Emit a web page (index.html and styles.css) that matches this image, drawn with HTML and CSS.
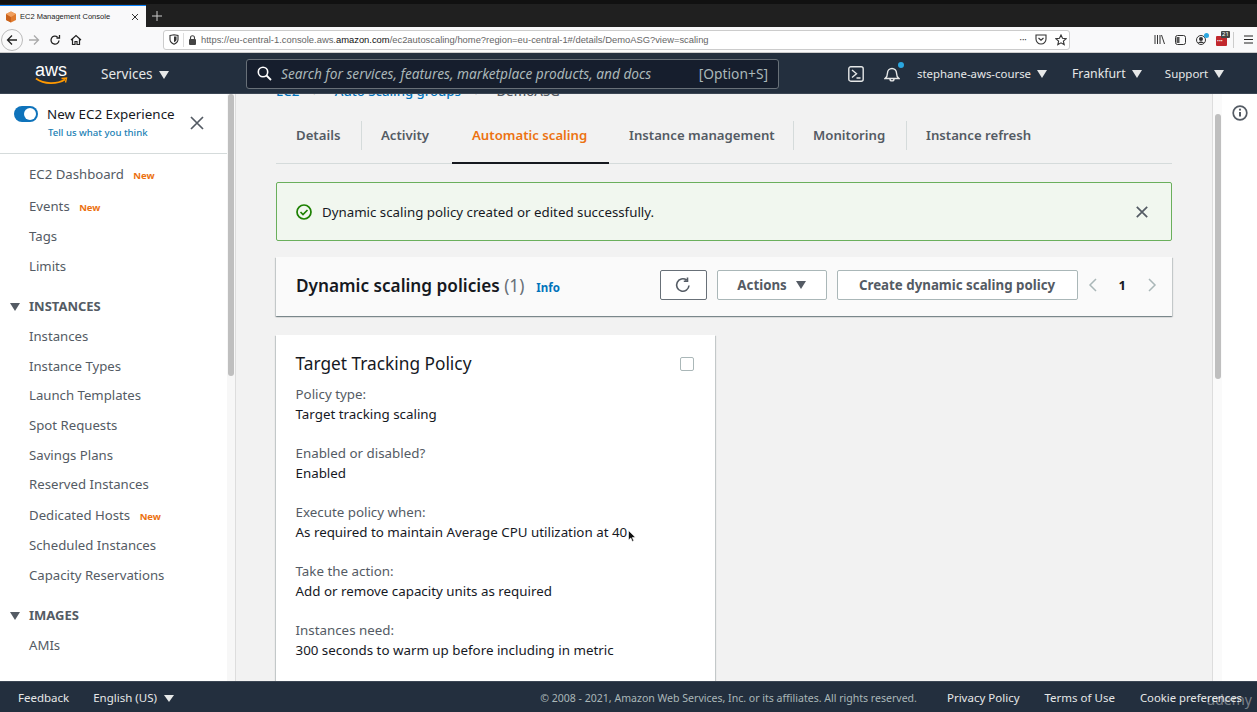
FILE: index.html
```html
<!DOCTYPE html>
<html lang="en">
<head>
  <meta charset="utf-8"/>
  <title>EC2 Management Console</title>
  <link rel="stylesheet" href="styles.css">
</head>
<body>
  <div class="tabbar">
    <div class="tab">
      <svg class="tab-icon" width="12" height="12" viewBox="0 0 12 12"><path d="M6 0.5 11 3v6L6 11.5 1 9V3z" fill="#e07b2e"/><path d="M6 6v5.5L1 9V3z" fill="#c9621c"/><path d="M6 0.5 11 3 6 6 1 3z" fill="#f0a060"/></svg>
      <span class="tab-title">EC2 Management Console</span>
      <svg class="tab-close" width="8" height="8" viewBox="0 0 8 8"><path d="M1 1l6 6M7 1L1 7" stroke="#333" stroke-width="1"/></svg>
    </div>
    <svg class="tab-new" width="10" height="10" viewBox="0 0 10 10"><path d="M5 0v10M0 5h10" stroke="#ccc" stroke-width="1"/></svg>
  </div>

  <div class="toolbar">
    <div class="back-btn">
      <svg width="12" height="12" viewBox="0 0 12 12"><path d="M11 6H1.500M6 1.500 1.500 6 6 10.500" fill="none" stroke="#222" stroke-width="1.300"/></svg>
    </div>
    <svg class="tool-icon" width="12" height="12" viewBox="0 0 12 12"><path d="M1 6h9.500M6 1.500 10.500 6 6 10.500" fill="none" stroke="#aaa" stroke-width="1.300"/></svg>
    <svg class="tool-icon" width="12" height="12" viewBox="0 0 12 12"><path d="M10 6.500A4 4 0 1 1 8.500 3M10.500 1v3h-3" fill="none" stroke="#222" stroke-width="1.300"/></svg>
    <svg class="tool-icon" width="12" height="12" viewBox="0 0 12 12"><path d="M1 6 6 1.500 11 6M2.500 5v5.500h2.500V7.500h2v3h2.500V5" fill="none" stroke="#222" stroke-width="1.200"/></svg>
    <div class="urlbar">
      <svg width="10" height="11" viewBox="0 0 10 11"><path d="M1 1.500 5 .8l4 .7v4c0 2.300-2 3.800-4 4.700-2-.9-4-2.400-4-4.700z" fill="none" stroke="#333" stroke-width="1.100"/><path d="M5 2.500h2.500v3C7.500 6.800 6 7.700 5 8.200z" fill="#333"/></svg>
      <span class="url-sep"></span>
      <svg width="9" height="10" viewBox="0 0 9 10"><rect x="1" y="4" width="7" height="6" rx="1" fill="#444"/><path d="M2.500 4V2.800a2 2 0 0 1 4 0V4" fill="none" stroke="#444" stroke-width="1.100"/></svg>
      <span class="url">https://eu-central-1.console.aws.<b>amazon.com</b>/ec2autoscaling/home?region=eu-central-1#/details/DemoASG?view=scaling</span>
      <span class="url-dots">•••</span>
      <svg class="url-act" width="12" height="11" viewBox="0 0 12 11"><path d="M1 1h10v4a5 5 0 0 1-10 0z" fill="none" stroke="#333" stroke-width="1.100"/><path d="M3.500 4 6 6.300 8.500 4" fill="none" stroke="#333" stroke-width="1.200"/></svg>
      <svg class="url-act" width="12" height="12" viewBox="0 0 12 12"><path d="M6 1l1.500 3.300 3.600.4-2.700 2.400.8 3.600L6 8.800l-3.200 1.900.8-3.600L.9 4.700l3.600-.4z" fill="none" stroke="#333" stroke-width="1.100"/></svg>
    </div>
    <div class="tool-right">
      <svg width="11" height="11" viewBox="0 0 11 11"><path d="M1 1v9M3.500 1v9M6 1v9M7.500 1l3 9" stroke="#333" stroke-width="1" fill="none"/></svg>
      <svg width="11" height="10" viewBox="0 0 11 10"><rect x=".5" y=".5" width="10" height="9" rx="2" fill="none" stroke="#333"/><rect x="1.500" y="2" width="3" height="6" fill="#555"/></svg>
      <span class="profile-ic">
        <svg width="10" height="10" viewBox="0 0 10 10"><circle cx="5" cy="5" r="4.500" fill="none" stroke="#333"/><circle cx="5" cy="4" r="2" fill="#333"/><path d="M2 8c1-2 5-2 6 0" fill="#333"/></svg>
        <i class="profile-dot"></i>
      </span>
      <span class="ext-ic"><i>•••</i><em>21</em></span>
      <span class="tool-sep"></span>
      <svg width="9" height="9" viewBox="0 0 9 9"><path d="M0 1h9M0 4.500h9M0 8h9" stroke="#222" stroke-width="1.100"/></svg>
    </div>
  </div>

  <header class="topnav">
    <div class="aws-logo">
      <span>aws</span>
      <svg width="33" height="9" viewBox="0 0 33 9"><path d="M1 1.500c8 6 21 6 29 1" fill="none" stroke="#f90" stroke-width="1.700"/><path d="M26.500 1.500l5-.5-1 4.500" fill="none" stroke="#f90" stroke-width="1.400"/></svg>
    </div>
    <a class="nav-item services">Services <i class="caret"></i></a>
    <div class="search">
      <svg width="15" height="15" viewBox="0 0 15 15"><circle cx="6" cy="6" r="4.700" fill="none" stroke="#fff" stroke-width="1.600"/><path d="M9.500 9.500 14 14" stroke="#fff" stroke-width="1.800"/></svg>
      <span class="search-text">Search for services, features, marketplace products, and docs</span>
      <span class="search-key">[Option+S]</span>
    </div>
    <svg class="cloudshell" width="16" height="16" viewBox="0 0 16 16"><rect x=".8" y=".8" width="14.400" height="14.400" rx="2" fill="none" stroke="#e6e8e8" stroke-width="1.400"/><path d="M4 4l4.500 3.800L4 11.500M8.500 12h4" fill="none" stroke="#e6e8e8" stroke-width="1.400"/></svg>
    <span class="bell">
      <svg width="16" height="16" viewBox="0 0 16 16"><path d="M1 12.500c2-1.500 2.500-3 2.500-5.500a4.500 4.500 0 0 1 9 0c0 2.500.5 4 2.500 5.500zM6 13c0 2.500 4 2.500 4 0" fill="none" stroke="#e6e8e8" stroke-width="1.400"/></svg>
      <i class="bell-dot"></i>
    </span>
    <a class="nav-item account">stephane-aws-course <i class="caret"></i></a>
    <a class="nav-item region">Frankfurt <i class="caret"></i></a>
    <a class="nav-item support">Support <i class="caret"></i></a>
  </header>

  <div class="workspace">
    <aside class="sidebar">
      <div class="exp">
        <div class="exp-text">
          <div class="exp-row"><span class="toggle"></span><span class="exp-title">New EC2 Experience</span></div>
          <a class="exp-link">Tell us what you think</a>
        </div>
        <svg class="exp-close" width="14" height="14" viewBox="0 0 14 14"><path d="M1 1l12 12M13 1 1 13" stroke="#545b64" stroke-width="1.700"/></svg>
      </div>
      <nav class="side-nav">
        <a class="new-row">EC2 Dashboard <em>New</em></a>
        <a class="new-row">Events <em>New</em></a>
        <a>Tags</a>
        <a>Limits</a>
        <h3><i class="side-caret"></i>INSTANCES</h3>
        <a>Instances</a>
        <a>Instance Types</a>
        <a>Launch Templates</a>
        <a>Spot Requests</a>
        <a>Savings Plans</a>
        <a>Reserved Instances</a>
        <a class="new-row">Dedicated Hosts <em>New</em></a>
        <a>Scheduled Instances</a>
        <a>Capacity Reservations</a>
        <h3><i class="side-caret"></i>IMAGES</h3>
        <a>AMIs</a>
      </nav>
    </aside>
    <div class="scroll-track left"><span class="thumb"></span></div>

    <main class="content">
      <div class="crumbs"><a>EC2</a><span>&gt;</span><a>Auto Scaling groups</a><span>&gt;</span><b>DemoASG</b></div>
      <div class="tabs">
        <a class="t t-details">Details</a>
        <a class="t t-activity sep">Activity</a>
        <a class="t t-scaling active">Automatic scaling</a>
        <a class="t t-manage">Instance management</a>
        <a class="t t-monitor sep">Monitoring</a>
        <a class="t sep">Instance refresh</a>
      </div>

      <div class="flash">
        <svg width="16" height="16" viewBox="0 0 16 16"><circle cx="8" cy="8" r="7" fill="none" stroke="#1d8102" stroke-width="1.700"/><path d="M4.500 8l2.500 2.500 4.500-4.500" fill="none" stroke="#1d8102" stroke-width="1.700"/></svg>
        <span class="flash-text">Dynamic scaling policy created or edited successfully.</span>
        <svg class="flash-close" width="12" height="12" viewBox="0 0 12 12"><path d="M.8.8l10.400 10.400M11.200.8.8 11.200" stroke="#545b64" stroke-width="1.700"/></svg>
      </div>

      <section class="policies-head">
        <h2>Dynamic scaling policies <span>(1)</span></h2>
        <a class="info">Info</a>
        <button class="btn refresh"><svg width="16" height="16" viewBox="0 0 16 16"><path d="M14 8.500A6.200 6.200 0 1 1 11.500 3M12.500 .5v3.700H8.800" fill="none" stroke="#545b64" stroke-width="1.600"/></svg></button>
        <button class="btn actions">Actions <i class="caret dark"></i></button>
        <button class="btn create">Create dynamic scaling policy</button>
        <div class="pager">
          <svg width="9" height="14" viewBox="0 0 9 14"><path d="M8 1 2 7l6 6" fill="none" stroke="#aab7b8" stroke-width="1.500"/></svg>
          <b>1</b>
          <svg width="9" height="14" viewBox="0 0 9 14"><path d="M1 1l6 6-6 6" fill="none" stroke="#aab7b8" stroke-width="1.500"/></svg>
        </div>
      </section>

      <section class="policy-card">
        <div class="card-title"><h3>Target Tracking Policy</h3><span class="check"></span></div>
        <dl>
          <dt>Policy type:</dt><dd>Target tracking scaling</dd>
          <dt>Enabled or disabled?</dt><dd>Enabled</dd>
          <dt>Execute policy when:</dt><dd>As required to maintain Average CPU utilization at 40</dd>
          <dt>Take the action:</dt><dd>Add or remove capacity units as required</dd>
          <dt>Instances need:</dt><dd>300 seconds to warm up before including in metric</dd>
        </dl>
      </section>
    </main>

    <div class="scroll-track right"><span class="thumb"></span></div>
    <div class="help-rail">
      <svg width="16" height="16" viewBox="0 0 16 16"><circle cx="8" cy="8" r="6.800" fill="none" stroke="#545b64" stroke-width="1.700"/><path d="M8 7v4.500" stroke="#545b64" stroke-width="2"/><circle cx="8" cy="4.700" r="1.100" fill="#545b64"/></svg>
    </div>
  </div>

  <footer class="foot">
    <a class="feedback">Feedback</a>
    <a class="lang">English (US) <i class="caret"></i></a>
    <span class="copy">© 2008 - 2021, Amazon Web Services, Inc. or its affiliates. All rights reserved.</span>
    <a>Privacy Policy</a>
    <a>Terms of Use</a>
    <a class="cookie">Cookie preferences</a>
  </footer>

  <span class="watermark">udemy</span>
  <svg class="cursor" width="8" height="13" viewBox="0 0 8 13"><path d="M.5.5v9.500l2.300-2 1.500 3.500 1.500-.7L4.300 7.500l3-.3z" fill="#111" stroke="#fff" stroke-width=".6"/></svg>
</body>
</html>
```

FILE: styles.css
```css
:root {
  --nav: #232f3e;
  --text: #16191f;
  --muted: #545b64;
  --link: #0073bb;
  --orange: #ec7211;
  --line: #d5dbdb;
  --font: "Noto Sans", "Open Sans", sans-serif;
}

* {
  margin: 0;
  padding: 0;
  box-sizing: border-box;
}

html, body {
  height: 100%;
  overflow: hidden;
}

body {
  display: flex;
  flex-direction: column;
  font-family: var(--font);
  color: var(--text);
  background: #fff;
  position: relative;
}

a {
  cursor: pointer;
}

/* browser chrome */
.tabbar {
  height: 27px;
  flex: none;
  display: flex;
  align-items: flex-end;
  background: #202020;
  border-top: 4px solid #111;
}

.tab {
  width: 146px;
  height: 22px;
  background: #f9f9fa;
  border-top: 1px solid #0a84ff;
  display: flex;
  align-items: center;
  padding-left: 5px;
  font-family: "Liberation Sans", sans-serif;
}

.tab-title {
  font-size: 7.500px;
  color: #222;
  margin-left: 3px;
  width: 111px;
  white-space: nowrap;
}

.tab-new {
  margin: 0 0 6px 6px;
}

.toolbar {
  height: 26px;
  flex: none;
  display: flex;
  align-items: center;
  background: #f9f9fa;
  border-bottom: 1px solid #ccc;
  padding-left: 1px;
}

.back-btn {
  width: 22px;
  height: 22px;
  border: 1px solid #bbb;
  border-radius: 50%;
  display: flex;
  align-items: center;
  justify-content: center;
  margin-right: 5px;
}

.tool-icon {
  margin-right: 9px;
}

.urlbar {
  width: 907px;
  height: 20px;
  margin-left: 72px;
  background: #fff;
  border: 1px solid #ccc;
  border-radius: 3px;
  display: flex;
  align-items: center;
  padding: 0 2px 0 5px;
  gap: 4px;
}

.url-sep {
  width: 1px;
  height: 14px;
  background: #ddd;
}

.url {
  font-family: "Liberation Sans", sans-serif;
  font-size: 9.400px;
  color: #666;
  flex: 1;
  white-space: nowrap;
}

.url b {
  font-weight: 400;
  color: #111;
}

.url-dots {
  font-size: 5px;
  color: #333;
  letter-spacing: 0.5px;
}

.url-act {
  margin-left: 4px;
}

.tool-right {
  flex: 1;
  display: flex;
  align-items: center;
  justify-content: flex-end;
  gap: 10px;
  padding-right: 4px;
}

.profile-ic {
  position: relative;
  display: flex;
}

.profile-dot {
  position: absolute;
  top: -2px;
  right: -3px;
  width: 5px;
  height: 5px;
  border-radius: 50%;
  background: #2aa7e0;
}

.ext-ic {
  position: relative;
  width: 11px;
  height: 10px;
  background: #c1272d;
  border-radius: 1px;
  margin-top: 2px;
}

.ext-ic i {
  position: absolute;
  left: 1px;
  top: 0;
  font-style: normal;
  font-size: 5px;
  color: #fff;
  line-height: 10px;
}

.ext-ic em {
  position: absolute;
  top: -5px;
  left: 5px;
  font-style: normal;
  font-size: 6px;
  line-height: 7px;
  padding: 0 1px;
  color: #fff;
  background: #444;
  border-radius: 1px;
}

.tool-sep {
  width: 1px;
  height: 16px;
  background: #ccc;
  margin-left: -4px;
}

/* aws nav */
.topnav {
  height: 41px;
  flex: none;
  background: var(--nav);
  border-bottom: 1px solid #3b4654;
  padding-top: 1px;
  display: flex;
  align-items: center;
  color: #e6e8e8;
  font-size: 12.300px;
}

.caret {
  display: inline-block;
  width: 0;
  height: 0;
  border-left: 5px solid transparent;
  border-right: 5px solid transparent;
  border-top: 8px solid currentColor;
  margin-left: 3px;
}

.caret.dark {
  color: var(--muted);
}

.aws-logo {
  width: 34px;
  margin-left: 34px;
  display: flex;
  flex-direction: column;
  align-items: center;
  color: #fff;
  font-family: "Liberation Sans", sans-serif;
  font-size: 18px;
  line-height: 16px;
}

.aws-logo svg {
  margin-top: -1px;
}

.services {
  margin-left: 33px;
  width: 145px;
  font-size: 13.500px;
}

.search {
  width: 533px;
  height: 30px;
  background: #161e2d;
  border: 1px solid #687078;
  border-radius: 3px;
  display: flex;
  align-items: center;
  padding: 0 10px;
  gap: 9px;
}

.search-text {
  flex: 1;
  font-style: italic;
  font-size: 13.700px;
  color: #aab7b8;
  white-space: nowrap;
}

.search-key {
  font-size: 13.800px;
  color: #aab7b8;
}

.cloudshell {
  margin-left: 69px;
}

.bell {
  position: relative;
  display: flex;
  margin-left: 20px;
}

.bell-dot {
  position: absolute;
  top: -4px;
  right: -4px;
  width: 6px;
  height: 6px;
  border-radius: 50%;
  background: #2aa7e0;
}

.account {
  margin-left: 17px;
  white-space: nowrap;
  font-size: 11.400px;
}

.region {
  margin-left: 25px;
}

.support {
  margin-left: 23px;
  font-size: 11.500px;
}

/* body area */
.workspace {
  flex: 1;
  min-height: 0;
  display: flex;
}

.sidebar {
  width: 227px;
  flex: none;
  overflow: hidden;
  background: #fff;
}

.exp {
  height: 60px;
  border-bottom: 1px solid var(--line);
  display: flex;
  padding: 11px 0 0 14px;
}

.exp-text {
  width: 176px;
}

.exp-row {
  display: flex;
  align-items: center;
  gap: 9px;
  height: 18px;
}

.toggle {
  position: relative;
  width: 24px;
  height: 16px;
  border-radius: 8px;
  background: #0f73bb;
}

.toggle::after {
  content: "";
  position: absolute;
  right: 2px;
  top: 2px;
  width: 12px;
  height: 12px;
  border-radius: 50%;
  background: #fff;
}

.exp-title {
  font-size: 13.400px;
  white-space: nowrap;
}

.exp-link {
  display: block;
  margin: 3px 0 0 34px;
  font-size: 9.600px;
  font-weight: 500;
  color: #1a7fb4;
  white-space: nowrap;
}

.exp-close {
  margin: 11px 0 0 0;
}

.side-nav {
  padding-top: 5px;
}

.side-nav a {
  display: block;
  height: 29.600px;
  line-height: 29.600px;
  padding-left: 29px;
  font-size: 13.200px;
  color: var(--muted);
  white-space: nowrap;
}

.side-nav .new-row {
  height: 31.500px;
  line-height: 30px;
}

.side-nav em {
  font-style: normal;
  font-weight: 700;
  font-size: 9.500px;
  color: var(--orange);
  margin-left: 6px;
}

.side-nav h3 {
  height: 31px;
  margin-top: 10px;
  line-height: 31px;
  padding-left: 10px;
  font-size: 13px;
  font-weight: 700;
  color: #545b64;
  display: flex;
  align-items: center;
}

.side-caret {
  width: 0;
  height: 0;
  border-left: 5px solid transparent;
  border-right: 5px solid transparent;
  border-top: 8px solid var(--muted);
  margin-right: 9px;
}

.scroll-track {
  flex: none;
  background: #f7f7f7;
  display: flex;
  justify-content: center;
  align-items: flex-start;
}

.scroll-track.left {
  width: 9px;
  border-right: 1px solid #ddd;
}

.scroll-track.right {
  width: 10px;
  border-left: 1px solid #ddd;
  background: #fafafa;
}

.thumb {
  width: 6px;
  background: #bfbfbf;
  border-radius: 3px;
}

.left .thumb {
  height: 282px;
}

.right .thumb {
  height: 265px;
  margin-top: 20px;
}

.content {
  flex: 1;
  min-width: 0;
  overflow: hidden;
  background: #f2f2f2;
  padding: 0 40px;
}

.crumbs {
  display: flex;
  gap: 14px;
  margin-top: -12px;
  height: 26px;
  font-size: 13.200px;
  line-height: 18px;
  font-weight: 500;
  color: #687078;
  align-items: flex-start;
}

.crumbs a {
  color: var(--link);
}

.crumbs b {
  font-weight: 500;
  color: var(--muted);
}

.tabs {
  display: flex;
  height: 56px;
  border-bottom: 1px solid var(--line);
}

.t {
  position: relative;
  height: 56px;
  padding: 0 20px;
  font-size: 13.200px;
  font-weight: 600;
  color: var(--muted);
  line-height: 55px;
  white-space: nowrap;
}

.t-details {
  width: 85px;
}

.t-activity {
  width: 91px;
}

.t-scaling {
  width: 157px;
}

.t-manage {
  width: 184px;
}

.t-monitor {
  width: 113px;
}

.t.sep::before {
  content: "";
  position: absolute;
  left: 0;
  top: 13px;
  height: 29px;
  width: 1px;
  background: var(--line);
}

.t.active {
  color: var(--orange);
  border-bottom: 2px solid #16191f;
}

.flash {
  margin-top: 18px;
  height: 59px;
  display: flex;
  align-items: center;
  background: #f1f7ef;
  border: 1px solid #6aaf5c;
  border-radius: 2px;
  padding: 0 23px 0 19px;
}

.flash-text {
  flex: 1;
  margin-left: 10px;
  font-size: 13.300px;
}

.policies-head {
  margin-top: 16px;
  height: 59px;
  display: flex;
  align-items: center;
  background: #fafafa;
  box-shadow: 0 1px 1px 0 rgba(0, 28, 36, 0.3), 1px 1px 1px 0 rgba(0, 28, 36, 0.15), -1px 1px 1px 0 rgba(0, 28, 36, 0.15);
  padding: 0 15px 3px 20px;
}

.policies-head h2 {
  font-size: 17.200px;
  font-weight: 600;
  white-space: nowrap;
}

.policies-head h2 span {
  font-weight: 400;
  color: #687078;
}

.info {
  margin-left: 12px;
  margin-top: 5px;
  font-size: 11.500px;
  font-weight: 700;
  color: var(--link);
  flex: 1;
}

.btn {
  height: 30px;
  background: #fff;
  border: 1px solid #aab7b8;
  border-radius: 2px;
  color: var(--muted);
  font-family: var(--font);
  font-size: 13.300px;
  font-weight: 700;
  margin-right: 10px;
  white-space: nowrap;
  display: flex;
  align-items: center;
  justify-content: center;
}

.refresh {
  width: 47px;
  border-color: #687078;
}

.actions {
  width: 110px;
  gap: 6px;
}

.create {
  width: 241px;
}

.pager {
  display: flex;
  align-items: center;
  gap: 22px;
  font-size: 13px;
}

.policy-card {
  margin-top: 19px;
  width: 439px;
  height: 420px;
  background: #fff;
  box-shadow: 0 1px 1px 0 rgba(0, 28, 36, 0.3), 1px 1px 1px 0 rgba(0, 28, 36, 0.15), -1px 1px 1px 0 rgba(0, 28, 36, 0.15);
  padding: 16px 20px 0 19.500px;
}

.card-title {
  display: flex;
  justify-content: space-between;
  align-items: center;
  height: 25px;
}

.card-title h3 {
  font-size: 17.300px;
  font-weight: 400;
}

.check {
  width: 14px;
  height: 14px;
  border: 1px solid #aab7b8;
  border-radius: 2px;
  margin-right: 1px;
}

dl {
  margin-top: 9px;
  font-size: 13.350px;
  line-height: 19.500px;
}

dt {
  color: var(--muted);
}

dd {
  color: var(--text);
  margin-bottom: 20px;
  white-space: nowrap;
}

.help-rail {
  width: 35px;
  flex: none;
  display: flex;
  justify-content: center;
  align-items: flex-start;
  padding-top: 11px;
  background: #fff;
}

/* footer */
.foot {
  height: 31px;
  flex: none;
  background: var(--nav);
  border-top: 1px solid #3b4654;
  padding: 1px 15px 0 18px;
  display: flex;
  align-items: center;
  color: #e6e8e8;
  font-size: 11.500px;
}

.lang {
  margin-left: 24px;
}

.lang .caret {
  border-top-width: 7px;
  margin-left: 4px;
}

.copy {
  margin-left: auto;
  font-size: 10.550px;
  color: #aab7b8;
}

.foot a {
  white-space: nowrap;
}

.foot .copy + a {
  margin-left: 30px;
}

.foot .copy ~ a ~ a {
  margin-left: 25px;
}

.foot .cookie {
  font-size: 11.300px;
}

.watermark {
  position: absolute;
  right: 5px;
  bottom: 3px;
  font-size: 14px;
  color: rgba(255, 255, 255, 0.4);
}

.cursor {
  position: absolute;
  left: 628px;
  top: 530px;
}
```
